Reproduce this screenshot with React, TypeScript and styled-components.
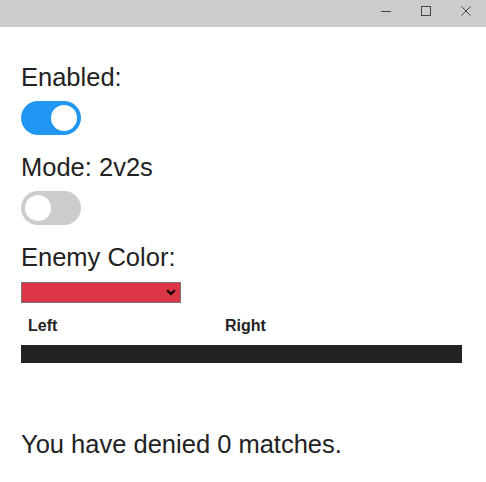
import React, { useState } from "react";
import styled, { createGlobalStyle } from "styled-components";

const Global = createGlobalStyle`
  html, body { margin: 0; padding: 0; background: #fff; }
  body { font-family: "Liberation Sans", Arial, sans-serif; color: #222; }
`;

const Window = styled.div`
  width: 486px;
  height: 482px;
  display: flex;
  flex-direction: column;
  overflow: hidden;
`;

const TitleBar = styled.div`
  height: 27px;
  background: #cccccc;
  display: flex;
  justify-content: flex-end;
  flex-shrink: 0;
`;

const TitleButton = styled.div`
  width: 40px;
  height: 21px;
  display: flex;
  align-items: center;
  justify-content: center;
  color: #444;
`;

const Content = styled.div`
  padding: 35px 24px 0 21px;
  display: flex;
  flex-direction: column;
`;

const Label = styled.div<{ $gap?: number }>`
  font-size: 25.5px;
  line-height: 30px;
  margin-top: ${(p) => p.$gap ?? 0}px;
`;

const Track = styled.button<{ $on: boolean }>`
  position: relative;
  width: 60px;
  height: 34px;
  border: 0;
  padding: 0;
  margin-top: 9px;
  border-radius: 34px;
  background: ${(p) => (p.$on ? "#2196F3" : "#cccccc")};
  cursor: pointer;
  &::before {
    content: "";
    position: absolute;
    top: 4px;
    left: ${(p) => (p.$on ? "30px" : "4px")};
    width: 26px;
    height: 26px;
    border-radius: 50%;
    background: #fff;
  }
`;

const SelectWrap = styled.div`
  position: relative;
  width: 160px;
  height: 21px;
  margin-top: 10px;
`;

const Select = styled.select`
  appearance: none;
  -webkit-appearance: none;
  width: 160px;
  height: 21px;
  margin: 0;
  box-sizing: border-box;
  border: 1px solid #767676;
  border-radius: 0;
  background: #dc3545;
  color: #fff;
  font-family: "Liberation Sans", Arial, sans-serif;
  font-size: 13px;
  outline: none;
`;

const Chevron = styled.svg`
  position: absolute;
  right: 5px;
  top: 7px;
  pointer-events: none;
`;

const Table = styled.div`
  width: 441px;
  margin-top: 14px;
  display: flex;
  flex-direction: column;
`;

const HeadRow = styled.div`
  display: grid;
  grid-template-columns: 197px 1fr;
  height: 18px;
`;

const HeadCell = styled.div`
  font-weight: bold;
  font-size: 16px;
  line-height: 18px;
  padding: 0 7px;
  color: #222;
`;

const DarkRow = styled.div`
  height: 18px;
  margin-top: 10px;
  background: #222222;
`;

const Footer = styled.div`
  font-size: 25.5px;
  line-height: 30px;
  margin-top: 66px;
`;

const Toggle = ({ initial }: { initial: boolean }) => {
  const [on, setOn] = useState(initial);
  return <Track $on={on} onClick={() => setOn(!on)} aria-pressed={on} />;
};

export default function App() {
  return (
    <>
      <Global />
      <Window>
        <TitleBar>
          <TitleButton>
            <svg width="10" height="10" viewBox="0 0 10 10">
              <line x1="0" y1="5.5" x2="10" y2="5.5" stroke="currentColor" strokeWidth="1" />
            </svg>
          </TitleButton>
          <TitleButton>
            <svg width="10" height="10" viewBox="0 0 10 10">
              <rect x="0.5" y="0.5" width="9" height="9" fill="none" stroke="currentColor" strokeWidth="1" />
            </svg>
          </TitleButton>
          <TitleButton>
            <svg width="10" height="10" viewBox="0 0 10 10">
              <path d="M0.5 0.5 L9.5 9.5 M9.5 0.5 L0.5 9.5" stroke="currentColor" strokeWidth="1" />
            </svg>
          </TitleButton>
        </TitleBar>
        <Content>
          <Label>Enabled:</Label>
          <Toggle initial={true} />
          <Label $gap={17}>Mode: 2v2s</Label>
          <Toggle initial={false} />
          <Label $gap={17}>Enemy Color:</Label>
          <SelectWrap>
            <Select defaultValue="red">
              <option value="red"></option>
              <option value="blue"></option>
            </Select>
            <Chevron width="10" height="7" viewBox="0 0 10 7">
              <path d="M1.2 1.2 L5 5 L8.8 1.2" fill="none" stroke="#000" strokeWidth="2.2" />
            </Chevron>
          </SelectWrap>
          <Table>
            <HeadRow>
              <HeadCell>Left</HeadCell>
              <HeadCell>Right</HeadCell>
            </HeadRow>
            <DarkRow />
          </Table>
          <Footer>You have denied 0 matches.</Footer>
        </Content>
      </Window>
    </>
  );
}
